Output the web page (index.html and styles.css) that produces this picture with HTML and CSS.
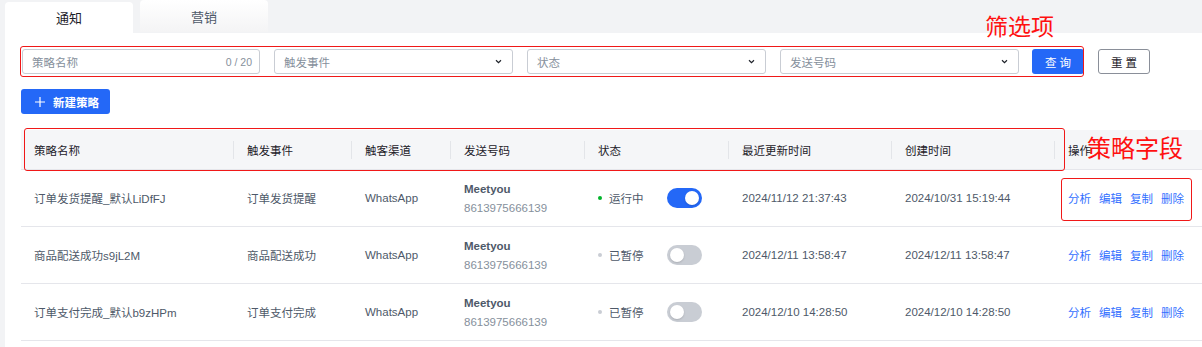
FILE: index.html
```html
<!DOCTYPE html>
<html lang="zh-CN">
<head>
    <meta charset="UTF-8">
    <title>策略列表</title>
    <link rel="stylesheet" href="styles.css">
</head>
<body>
    <div class="page">
        <div class="tabs">
            <div class="tab active">通知</div>
            <div class="tab">营销</div>
        </div>
        <div class="panel">
            <div class="filters">
                <div class="field input">
                    <span class="placeholder">策略名称</span>
                    <span class="count">0 / 20</span>
                </div>
                <div class="field select">
                    <span class="placeholder">触发事件</span>
                    <svg class="chevron" viewBox="0 0 8 6"><path d="M1 1.5 4 4.5 7 1.5" fill="none" stroke="#1d2129" stroke-width="1.4"/></svg>
                </div>
                <div class="field select">
                    <span class="placeholder">状态</span>
                    <svg class="chevron" viewBox="0 0 8 6"><path d="M1 1.5 4 4.5 7 1.5" fill="none" stroke="#1d2129" stroke-width="1.4"/></svg>
                </div>
                <div class="field select">
                    <span class="placeholder">发送号码</span>
                    <svg class="chevron" viewBox="0 0 8 6"><path d="M1 1.5 4 4.5 7 1.5" fill="none" stroke="#1d2129" stroke-width="1.4"/></svg>
                </div>
                <button class="btn primary">查 询</button>
                <button class="btn outline">重 置</button>
                <div class="mark mark-filters"></div>
                <div class="note note-filters">筛选项</div>
            </div>

            <button class="btn primary create">
                <svg viewBox="0 0 10 10"><path d="M5 0v10M0 5h10" stroke="#fff" stroke-width="1.2"/></svg>
                新建策略
            </button>

            <div class="table-wrap">
                <table class="table">
                    <colgroup>
                        <col style="width: 212px">
                        <col style="width: 118px">
                        <col style="width: 99px">
                        <col style="width: 134px">
                        <col style="width: 144px">
                        <col style="width: 163px">
                        <col style="width: 163px">
                        <col style="width: 168px">
                    </colgroup>
                    <thead>
                        <tr>
                            <th>策略名称</th>
                            <th>触发事件</th>
                            <th>触客渠道</th>
                            <th>发送号码</th>
                            <th>状态</th>
                            <th>最近更新时间</th>
                            <th>创建时间</th>
                            <th>操作</th>
                        </tr>
                    </thead>
                    <tbody>
                        <tr>
                            <td>订单发货提醒_默认LiDfFJ</td>
                            <td>订单发货提醒</td>
                            <td>WhatsApp</td>
                            <td><div class="sender">Meetyou</div><div class="phone">8613975666139</div></td>
                            <td><div class="status"><span class="dot on"></span>运行中<span class="switch on"></span></div></td>
                            <td>2024/11/12 21:37:43</td>
                            <td>2024/10/31 15:19:44</td>
                            <td class="actions"><a>分析</a><a>编辑</a><a>复制</a><a>删除</a></td>
                        </tr>
                        <tr>
                            <td>商品配送成功s9jL2M</td>
                            <td>商品配送成功</td>
                            <td>WhatsApp</td>
                            <td><div class="sender">Meetyou</div><div class="phone">8613975666139</div></td>
                            <td><div class="status"><span class="dot"></span>已暂停<span class="switch"></span></div></td>
                            <td>2024/12/11 13:58:47</td>
                            <td>2024/12/11 13:58:47</td>
                            <td class="actions"><a>分析</a><a>编辑</a><a>复制</a><a>删除</a></td>
                        </tr>
                        <tr>
                            <td>订单支付完成_默认b9zHPm</td>
                            <td>订单支付完成</td>
                            <td>WhatsApp</td>
                            <td><div class="sender">Meetyou</div><div class="phone">8613975666139</div></td>
                            <td><div class="status"><span class="dot"></span>已暂停<span class="switch"></span></div></td>
                            <td>2024/12/10 14:28:50</td>
                            <td>2024/12/10 14:28:50</td>
                            <td class="actions"><a>分析</a><a>编辑</a><a>复制</a><a>删除</a></td>
                        </tr>
                    </tbody>
                </table>
                <div class="mark mark-header"></div>
                <div class="mark mark-actions"></div>
                <div class="note note-fields">策略字段</div>
            </div>
        </div>
    </div>
</body>
</html>
```

FILE: styles.css
```css
html, body {
    margin: 0;
    height: 100%;
    overflow: hidden;
}
body {
    font-family: 'Liberation Sans', 'Noto Sans CJK SC', sans-serif;
    background-color: #f2f3f5;
    color: #4e5969;
    font-size: 11.5px;
}
.page {
    padding-left: 5px;
}
.tabs {
    display: flex;
    gap: 7px;
    height: 33px;
}
.tab {
    width: 128px;
    height: 32px;
    display: flex;
    align-items: center;
    justify-content: center;
    font-size: 13px;
    color: #4e5969;
    border-radius: 4px 4px 0 0;
    background: linear-gradient(#ffffff, #f4f4f5);
}
.tab.active {
    margin-top: 2px;
    height: 31px;
    background: #fff;
    color: #1d2129;
}
.panel {
    background-color: #fff;
    padding: 16px 0 0 16px;
    height: 400px;
}
.filters {
    position: relative;
    display: flex;
    align-items: center;
    height: 25px;
}
.field {
    box-sizing: border-box;
    width: 239px;
    height: 25px;
    margin-right: 14px;
    border: 1px solid #c9cdd4;
    border-radius: 3px;
    display: flex;
    align-items: center;
    justify-content: space-between;
    padding: 0 10px 0 9px;
}
.field:first-child {
    margin-left: 1px;
    width: 238px;
    padding-right: 7px;
}
.placeholder {
    color: #86909c;
}
.count {
    color: #86909c;
    font-size: 10.5px;
}
.chevron {
    width: 7px;
    height: 5px;
}
.btn {
    font-family: inherit;
    font-size: 11.5px;
    height: 25px;
    border-radius: 3px;
    cursor: pointer;
    padding: 0;
}
.btn.primary {
    background-color: #2468f7;
    border: none;
    color: #fff;
}
.filters .btn {
    width: 52px;
    margin-left: -1px;
}
.btn.outline {
    background: #fff;
    border: 1px solid #8a8f99;
    color: #1d2129;
    margin-left: 14px !important;
}
.create {
    display: flex;
    align-items: center;
    gap: 8px;
    margin-top: 15px;
    width: 89px;
    padding-left: 14px;
    font-weight: bold;
}
.create svg {
    width: 10px;
    height: 10px;
}
.table-wrap {
    position: relative;
    margin-top: 16px;
}
.table {
    border-collapse: collapse;
    table-layout: fixed;
    width: 1201px;
}
.table th {
    position: relative;
    height: 39px;
    padding: 0 13px;
    text-align: left;
    font-weight: normal;
    color: #1d2129;
    background-color: #f5f6f8;
    border-bottom: 1px solid #e5e6eb;
}
.table th + th::before {
    content: '';
    position: absolute;
    left: 0;
    top: 11px;
    height: 18px;
    width: 1px;
    background-color: #e3e5e9;
}
.table th + th,
.table td + td {
    padding-left: 14px;
}
.table td {
    height: 56px;
    padding: 0 13px;
    border-bottom: 1px solid #e5e6eb;
    white-space: nowrap;
}
.sender {
    font-weight: bold;
    color: #4e5969;
    margin-bottom: 7px;
}
.phone {
    color: #86909c;
}
.status {
    display: flex;
    align-items: center;
}
.dot {
    width: 4px;
    height: 4px;
    border-radius: 50%;
    background-color: #c9cdd4;
    margin-right: 7px;
}
.dot.on {
    background-color: #00b42a;
}
.switch {
    position: relative;
    width: 35px;
    height: 20px;
    border-radius: 10px;
    background-color: #c9cdd4;
    margin-left: 23px;
}
.switch::after {
    content: '';
    position: absolute;
    top: 3px;
    left: 3px;
    width: 14px;
    height: 14px;
    border-radius: 50%;
    background-color: #fff;
    box-shadow: 0 1px 2px rgba(0, 0, 0, 0.15);
}
.switch.on {
    background-color: #2468f7;
}
.switch.on::after {
    left: 18px;
}
.actions a {
    color: #3370ff;
    margin-right: 8px;
    cursor: pointer;
}

/* red review marks */
.mark {
    position: absolute;
    border: 1px solid #f01818;
    border-radius: 3px;
    pointer-events: none;
}
.mark-filters {
    left: -1px;
    top: -3px;
    width: 1062px;
    height: 29px;
}
.mark-header {
    left: 3px;
    top: -2px;
    width: 1039px;
    height: 41px;
}
.mark-actions {
    left: 1040px;
    top: 48px;
    width: 129px;
    height: 41px;
}
.note {
    position: absolute;
    color: #ff1010;
    font-family: 'Noto Sans CJK SC', sans-serif;
    line-height: 1;
    white-space: nowrap;
}
.note-filters {
    left: 964px;
    top: -35px;
    font-size: 23px;
}
.note-fields {
    left: 1066px;
    top: 5px;
    font-size: 24px;
}
```
